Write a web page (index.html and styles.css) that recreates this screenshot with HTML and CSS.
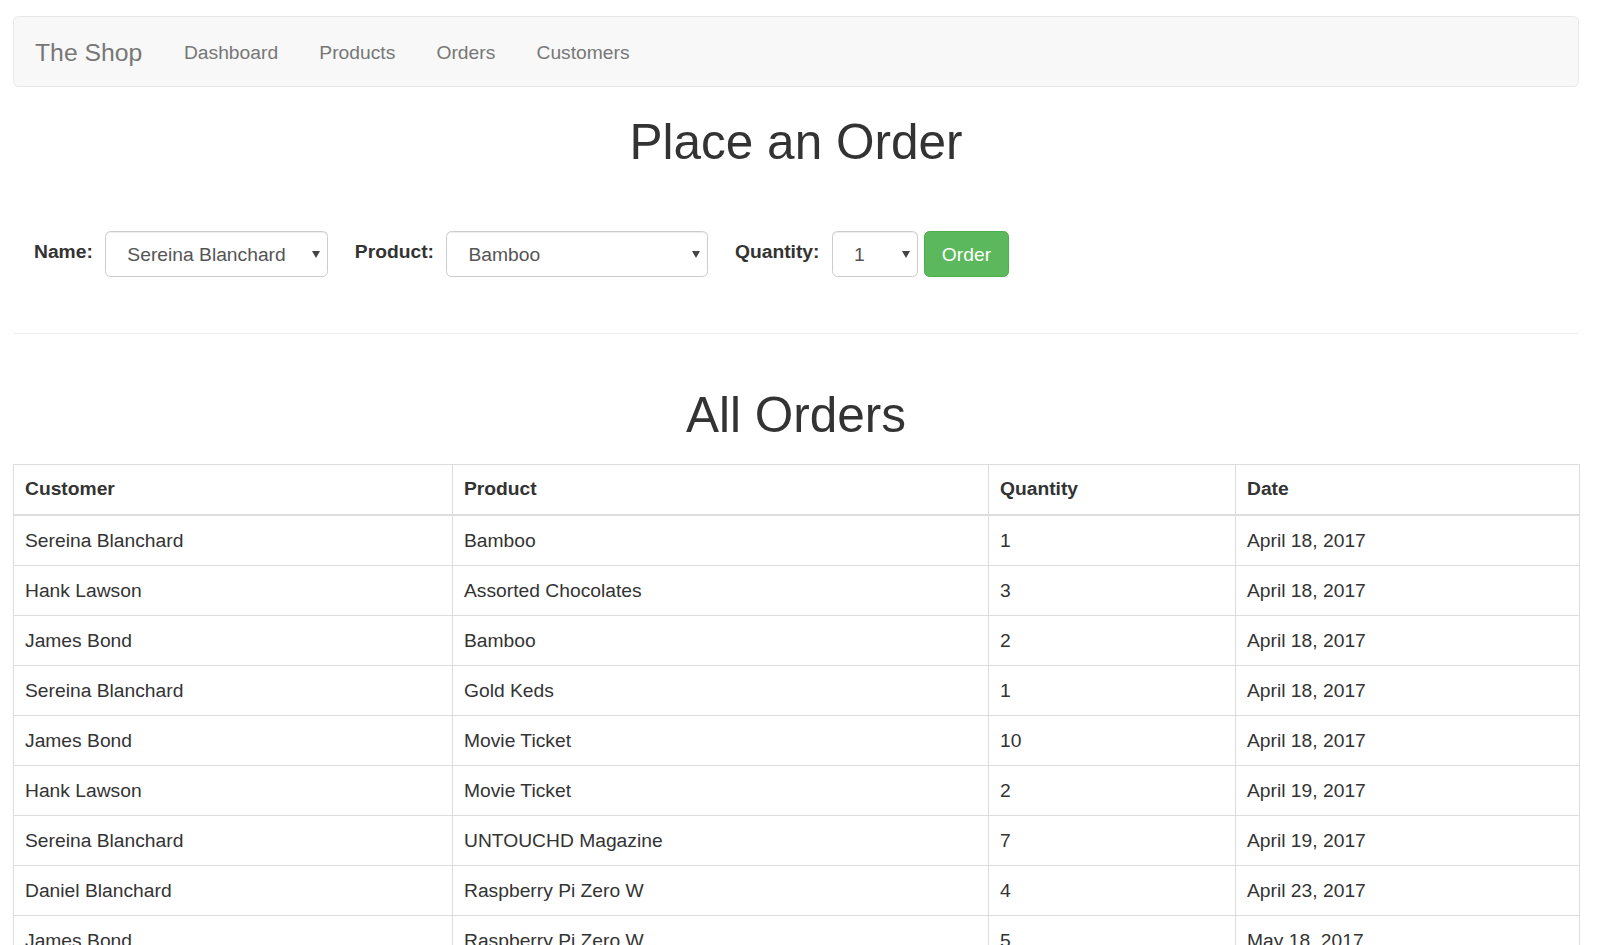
FILE: index.html
```html
<!DOCTYPE html>
<html lang="en">
<head>
<meta charset="utf-8">
<title>The Shop - Orders</title>
<link rel="stylesheet" href="styles.css">
</head>
<body>
<div class="page">
  <nav class="navbar">
    <a class="brand" href="#">The Shop</a>
    <ul class="nav">
      <li><a href="#">Dashboard</a></li>
      <li><a href="#">Products</a></li>
      <li><a href="#">Orders</a></li>
      <li><a href="#">Customers</a></li>
    </ul>
  </nav>

  <h1 class="title">Place an Order</h1>

  <form class="order-form">
    <label class="lbl lbl-name" for="name">Name:</label>
    <span class="select-wrap sel-name">
      <select id="name" class="control">
        <option>Sereina Blanchard</option>
        <option>Hank Lawson</option>
        <option>James Bond</option>
        <option>Daniel Blanchard</option>
      </select>
    </span>
    <label class="lbl lbl-gap" for="product">Product:</label>
    <span class="select-wrap sel-product">
      <select id="product" class="control">
        <option>Bamboo</option>
        <option>Assorted Chocolates</option>
        <option>Gold Keds</option>
        <option>Movie Ticket</option>
        <option>UNTOUCHD Magazine</option>
        <option>Raspberry Pi Zero W</option>
      </select>
    </span>
    <label class="lbl lbl-gap" for="qty">Quantity:</label>
    <span class="select-wrap sel-qty">
      <select id="qty" class="control">
        <option>1</option>
        <option>2</option>
        <option>3</option>
        <option>4</option>
        <option>5</option>
      </select>
    </span>
    <button type="button" class="btn-order">Order</button>
  </form>

  <hr class="divider">

  <h1 class="title title-orders">All Orders</h1>

  <table class="orders">
    <colgroup>
      <col class="c-customer">
      <col class="c-product">
      <col class="c-qty">
      <col class="c-date">
    </colgroup>
    <thead>
      <tr><th>Customer</th><th>Product</th><th>Quantity</th><th>Date</th></tr>
    </thead>
    <tbody>
      <tr><td>Sereina Blanchard</td><td>Bamboo</td><td>1</td><td>April 18, 2017</td></tr>
      <tr><td>Hank Lawson</td><td>Assorted Chocolates</td><td>3</td><td>April 18, 2017</td></tr>
      <tr><td>James Bond</td><td>Bamboo</td><td>2</td><td>April 18, 2017</td></tr>
      <tr><td>Sereina Blanchard</td><td>Gold Keds</td><td>1</td><td>April 18, 2017</td></tr>
      <tr><td>James Bond</td><td>Movie Ticket</td><td>10</td><td>April 18, 2017</td></tr>
      <tr><td>Hank Lawson</td><td>Movie Ticket</td><td>2</td><td>April 19, 2017</td></tr>
      <tr><td>Sereina Blanchard</td><td>UNTOUCHD Magazine</td><td>7</td><td>April 19, 2017</td></tr>
      <tr><td>Daniel Blanchard</td><td>Raspberry Pi Zero W</td><td>4</td><td>April 23, 2017</td></tr>
      <tr><td>James Bond</td><td>Raspberry Pi Zero W</td><td>5</td><td>May 18, 2017</td></tr>
    </tbody>
  </table>
</div>
</body>
</html>
```

FILE: styles.css
```css
html, body {
  margin: 0;
  padding: 0;
  background: #fff;
}

body {
  font-family: "Liberation Sans", Arial, Helvetica, sans-serif;
  font-size: 19.25px;
  line-height: 27px;
  color: #333;
}

.page {
  margin: 0 26px 0 13px;
  padding-top: 16px;
}

/* Navbar */
.navbar {
  height: 68px;
  padding-top: 1px;
  display: flex;
  align-items: center;
  padding-left: 21px;
  background: #f8f8f8;
  border: 1px solid #e7e7e7;
  border-radius: 5.5px;
}

.brand {
  font-size: 24.75px;
  line-height: 27px;
  color: #777;
  text-decoration: none;
  margin-right: 21px;
}

.nav {
  display: flex;
  list-style: none;
  margin: 0;
  padding: 0;
}

.nav a {
  display: block;
  padding: 0 20.6px;
  color: #777;
  text-decoration: none;
}

/* Headings */
.title {
  margin: 28px 0 0;
  text-align: center;
  font-size: 49.5px;
  line-height: 54px;
  font-weight: 400;
  color: #333;
}

.title-orders {
  margin: 54px 0 0;
}

/* Form */
.order-form {
  display: flex;
  align-items: center;
  height: 46px;
  margin-top: 62px;
  padding-left: 21px;
}

.lbl {
  font-weight: 700;
  margin-bottom: 5px;
}

.lbl-gap {
  margin-left: 26.5px;
}

.select-wrap {
  position: relative;
  display: block;
  height: 46px;
  margin-left: 12.5px;
}

.select-wrap::after {
  content: "";
  position: absolute;
  right: 8px;
  top: 20px;
  width: 0;
  height: 0;
  border-left: 4px solid transparent;
  border-right: 4px solid transparent;
  border-top: 7px solid #444;
  pointer-events: none;
}

.sel-name { width: 223px; }
.sel-product { width: 262px; }
.sel-qty { width: 86px; }

.control {
  -webkit-appearance: none;
  appearance: none;
  box-sizing: border-box;
  width: 100%;
  height: 46px;
  margin: 0;
  padding: 0 24px 0 21px;
  font-family: inherit;
  font-size: 19.25px;
  line-height: 27px;
  color: #555;
  background: #fff;
  border: 1px solid #ccc;
  border-radius: 5.5px;
  box-shadow: inset 0 1px 1px rgba(0, 0, 0, 0.075);
}

.btn-order {
  box-sizing: border-box;
  height: 46px;
  width: 85px;
  margin-left: 6px;
  padding: 0 16px;
  font-family: inherit;
  font-size: 19.25px;
  line-height: 27px;
  color: #fff;
  background: #5cb85c;
  border: 1px solid #4cae4c;
  border-radius: 5.5px;
}

/* Divider */
.divider {
  margin: 56px 0 0;
  height: 0;
  border: 0;
  border-top: 1px solid #eee;
}

/* Table */
.orders {
  width: 1566px;
  margin-top: 22px;
  border-collapse: collapse;
  table-layout: fixed;
  border: 1px solid #ddd;
}

.c-customer { width: 439px; }
.c-product { width: 536px; }
.c-qty { width: 247px; }
.c-date { width: 344px; }

.orders th,
.orders td {
  padding: 11px;
  text-align: left;
  vertical-align: top;
  line-height: 27px;
  border: 1px solid #ddd;
}

.orders thead th {
  font-weight: 700;
  padding: 10px 11px 12px;
  border-top: 0;
  border-bottom: 2px solid #ddd;
}
```
